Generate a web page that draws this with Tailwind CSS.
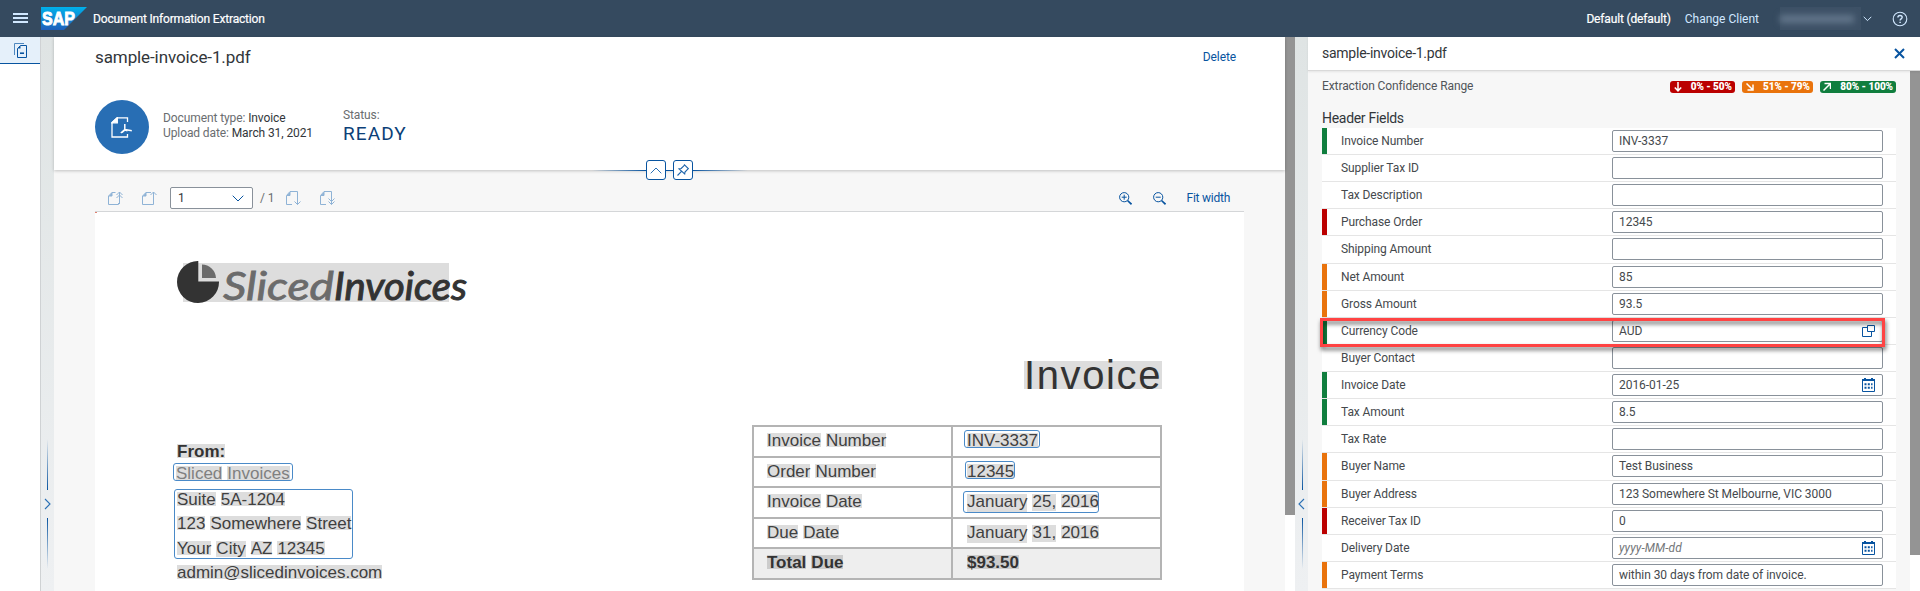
<!DOCTYPE html>
<html lang="en">
<head>
<meta charset="utf-8">
<title>Document Information Extraction</title>
<script src="https://cdn.jsdelivr.net/npm/@tailwindcss/browser@4"></script>
</head>
<body class="w-[1920px] h-[591px] overflow-hidden flex flex-col bg-[#f7f7f7] font-[Roboto,sans-serif] text-xs text-[#32363a] tracking-[-0.1px]">
<header class="h-[37px] shrink-0 bg-[#354a5f] flex items-center text-white">
  <svg class="ml-[13px]" width="15" height="11" fill="#d1e8ff"><path d="M0 0h15v2H0zM0 4h15v2H0zM0 8h15v2H0z"/></svg>
  <svg class="ml-[13px]" width="46" height="23" viewBox="0 0 46 23">
    <defs><linearGradient id="sap" x1="0" y1="0" x2="0" y2="1"><stop offset="0" stop-color="#00b1eb"/><stop offset="1" stop-color="#1e5fbb"/></linearGradient></defs>
    <path d="M0 0H46L23 23H0z" fill="url(#sap)"/>
    <text x="1" y="18" font-family="Liberation Sans" font-weight="700" font-size="19" letter-spacing="0" textLength="33" lengthAdjust="spacingAndGlyphs" fill="#fff" stroke="#fff" stroke-width=".9">SAP</text>
  </svg>
  <h1 class="ml-[6px] tracking-[-0.17px] pt-px [-webkit-text-stroke:0.2px_white]">Document Information Extraction</h1>
  <span class="ml-auto tracking-[-0.15px] pt-px [-webkit-text-stroke:0.2px_white]">Default (default)</span>
  <span class="ml-[14px] pt-px tracking-[0px] text-[#d1e8ff]">Change Client</span>
  <span class="ml-[21px] w-[81px] h-[23px] bg-[#3d5166] flex items-center"><span class="w-[74px] h-2 bg-[#62758a] blur-[3px]"></span></span>
  <svg class="ml-[2px]" width="9" height="6" fill="none" stroke="#d1e8ff"><path d="M.7.8 4.5 4.6 8.3.8"/></svg>
  <svg class="ml-[20px] mr-[12px]" width="16" height="16" fill="none" stroke="#d1e8ff"><circle cx="8" cy="8" r="6.8" stroke-width="1.1"/><path d="M5.9 6.5c0-2.8 4.3-2.6 4.3-.2 0 1.6-2.1 1.6-2.1 3.2" stroke-width="1.4"/><path d="M8.1 10.7v1.4" stroke-width="1.5"/></svg>
</header>

<div class="flex flex-1 min-h-0">
  <nav class="w-10 bg-white">
    <div class="h-[27px] bg-[#e5f0fa] border-b border-[#0854a0] flex items-center pl-[14px]">
      <svg width="13" height="15" fill="none" stroke="#0854a0"><path d="M.5 12V.5H10" stroke="#4f88bf"/><path d="M6.500 2.500h6v12h-9v-9z"/><path d="M3.500 5.500h3v-3z" fill="#0854a0" stroke="none"/><path d="M6 10.200h4" stroke-width="1.600"/></svg>
    </div>
  </nav>

  <div class="w-[14px] border-l border-[#cfd2d4] bg-linear-to-b from-[#dfe4e4] to-[#eef0f2] flex flex-col items-center pt-[402px]">
    <div class="w-px h-[51px] bg-linear-to-b from-transparent to-[#0854a0]"></div>
    <svg class="my-[8px]" width="7" height="12" fill="none" stroke="#2a70b5" stroke-width="1.1"><path d="M1 1l5 5-5 5"/></svg>
    <div class="w-px h-[51px] bg-linear-to-b from-[#0854a0] to-transparent"></div>
  </div>

  <main class="w-[1231px] flex flex-col">
    <section class="relative z-10 h-[133px] shrink-0 bg-white shadow-[0_1px_3px_rgba(0,0,0,0.22)] pl-[41px] pr-[48px]">
      <div class="flex justify-between h-[40px] items-center">
        <h2 class="text-[17px] tracking-[-0.1px]">sample-invoice-1.pdf</h2>
        <a class="text-[#0854a0] mr-px">Delete</a>
      </div>
      <div class="flex mt-[23px]">
        <div class="size-[54px] rounded-full bg-[#286eb4] flex items-center justify-center">
          <svg width="22" height="21" fill="none" stroke="#fff" stroke-width="1.3"><path d="M16.5 5V.8H6L1 5.500V20h15.500v-3"/><path d="M1 5.800H6.300V.8z" fill="#fff"/><path d="M13.800 7v5.500l-4 3.500M13.800 12.500c2.500.3 5 1 7 1.300M11 15.500l3-2.500 2.500.7" stroke-width="1.500"/></svg>
        </div>
        <div class="ml-[14px] w-[152px] whitespace-nowrap pt-[11px] leading-[15px] text-[#6a6d70]">
          <p>Document type: <span class="text-[#32363a]">Invoice</span></p>
          <p>Upload date: <span class="text-[#32363a]">March 31, 2021</span></p>
        </div>
        <div class="ml-[28px] pt-[8px] leading-[15px] text-[#6a6d70]">
          <p>Status:</p>
          <p class="text-[19px] leading-[22px] tracking-[1.1px] text-[#0c3f78]">READY</p>
        </div>
      </div>
      <div class="absolute left-[538px] bottom-[-10px] flex items-center">
        <div class="w-[54px] h-px bg-linear-to-r from-transparent to-[#0854a0]"></div>
        <button class="size-5 rounded-[3px] border border-[#0854a0] bg-white flex items-center justify-center"><svg width="12" height="7" fill="none" stroke="#2a70b5"><path d="M.7 6.300 6 1l5.300 5.300"/></svg></button>
        <div class="w-[7px] h-px bg-[#0854a0]"></div>
        <button class="size-5 rounded-[3px] border border-[#0854a0] bg-white flex items-center justify-center"><svg width="12" height="12" fill="none" stroke="#1c63aa" stroke-width="1.1"><path d="M.5 11.500 4.500 7.300M7.500.8l3.800 3.800-1 1L8 8l-.3 2L2 4.800l2.200-.3L6.800 1.800z"/></svg></button>
        <div class="w-[55px] h-px bg-linear-to-r from-[#0854a0] to-transparent"></div>
      </div>
    </section>

    <section class="flex flex-col flex-1 w-[1149px] ml-[41px]">
      <div class="h-[42px] shrink-0 border-b border-[#d4d6d8] flex items-center pt-[17px] pb-[2px] text-[#0854a0]">
        <svg class="ml-[13px]" width="16" height="15" fill="none" stroke="#8fb3d6"><path d="M7.500 1.500H4L.5 5v8.500h10V12"/><path d="M1 5h3V1.500" fill="#8fb3d6"/><path d="M11.500 13V1M8.500 4l3-3 3 3M8.500 7l3-3 3 3"/></svg>
        <svg class="ml-[18px]" width="16" height="15" fill="none" stroke="#8fb3d6"><path d="M9 1.500H4L.5 5v8.500h11V12"/><path d="M1 5h3V1.500" fill="#8fb3d6"/><path d="M11.500 13V1M8.500 4l3-3 3 3"/></svg>
        <div class="ml-[12px] w-[83px] h-[22px] shrink-0 border border-[#89919a] rounded-[2px] bg-white flex items-center justify-between pl-[7px] pr-[8px] text-[#32363a]">1<svg width="12" height="7" fill="none" stroke="#0854a0"><path d="M.7.7 6 6 11.300.7"/></svg></div>
        <span class="ml-[7px] text-[#6a6d70]">/ 1</span>
        <svg class="ml-[12px]" width="16" height="15" fill="none" stroke="#8fb3d6"><path d="M6 13.500H.5V4.500l3.500-4h7.500V4"/><path d="M1 4.500h3V1" fill="#8fb3d6"/><path d="M11.500 4v9.500M8.500 10.500l3 3 3-3"/></svg>
        <svg class="ml-[18px]" width="16" height="15" fill="none" stroke="#8fb3d6"><path d="M6 13.500H.5V4.500l3.500-4h7.500V4"/><path d="M1 4.500h3V1" fill="#8fb3d6"/><path d="M11.500 4v9.500M8.500 7.500l3 3 3-3M8.500 10.500l3 3 3-3"/></svg>
        <svg class="ml-auto" width="13" height="13" fill="none" stroke="#0854a0"><circle cx="5.200" cy="5.200" r="4.600"/><path d="M5.200 2.700v5M2.700 5.200h5"/><path d="M8.500 8.500l4 3.800" stroke-width="1.700"/></svg>
        <svg class="ml-[21px]" width="13" height="13" fill="none" stroke="#0854a0"><circle cx="5.200" cy="5.200" r="4.600"/><path d="M2.700 5.200h5"/><path d="M8.500 8.500l4 3.800" stroke-width="1.700"/></svg>
        <span class="ml-[21px] mr-[14px] tracking-[-0.25px]">Fit width</span>
      </div>

      <article class="relative flex-1 bg-white overflow-hidden flex justify-between pl-[82px] pr-[82px] font-['Liberation_Sans',Arial,sans-serif] text-[17px] leading-[16px] tracking-[0px] text-[#404040]">
        <div class="absolute left-0 top-0 w-[2px] h-px bg-[#e08070]"></div>
        <div class="w-[300px] pt-[49px]">
          <svg width="292" height="46" viewBox="0 0 292 46">
            <path d="M6 2h266v39H6z" fill="#ddd"/>
            <path d="M21.300 0V20.500H42A21 21 0 1 1 21.300 0z" fill="#333"/>
            <path d="M25 3.500A14.500 14.500 0 0 1 39 17H25z" fill="#6b6b6b"/>
            <g font-family="Lato" font-style="italic" font-size="38"><text x="46" y="39" textLength="111" lengthAdjust="spacingAndGlyphs" fill="#6b6b6b" stroke="#6b6b6b" stroke-width=".8">Sliced</text><text x="157" y="39" textLength="133" lengthAdjust="spacingAndGlyphs" fill="#333" stroke="#333" stroke-width="1">Invoices</text></g>
          </svg>
          <div class="mt-[137px] flex font-bold text-[#333]"><span class="h-[14px] bg-[#ddd]">From:</span></div>
          <div class="relative mt-[8px] flex gap-[5px] text-[#808080] ml-[-1px]"><span class="h-[15px] bg-[#ddd]">Sliced</span><span class="h-[15px] bg-[#ddd]">Invoices</span>
            <div class="absolute left-[-3px] top-[-3px] w-[120px] h-[18px] border border-[#4a8ac8] rounded-[3px]"></div></div>
          <div class="relative mt-[11px] flex gap-[5px]"><span class="h-[14px] bg-[#ddd]">Suite</span><span class="h-[14px] bg-[#ddd]">5A-1204</span>
            <div class="absolute left-[-3px] top-[-3px] w-[179px] h-[70px] border border-[#4a8ac8] rounded-[3px]"></div></div>
          <div class="mt-[10px] flex gap-[5px]"><span class="h-[14px] bg-[#ddd]">123</span><span class="h-[14px] bg-[#ddd]">Somewhere</span><span class="h-[14px] bg-[#ddd]">Street</span></div>
          <div class="mt-[11px] h-[14px] flex gap-[5px] items-start"><span class="h-[14px] bg-[#ddd]">Your</span><span class="h-[16px] bg-[#ddd]">City</span><span class="h-[14px] bg-[#ddd]">AZ</span><span class="h-[14px] bg-[#ddd]">12345</span></div>
          <div class="mt-[10px] flex"><span class="h-[14px] bg-[#ddd]">admin@slicedinvoices.com</span></div>
        </div>

        <div class="w-[410px] pt-[149px]">
          <div class="flex justify-end"><h3 class="h-[28px] leading-[28px] bg-[#ddd] text-[40px] tracking-[1.6px] text-[#333]">Invoice</h3></div>
          <div class="mt-[36px] border-2 border-b-0 border-[#b4b4b4]">
            <div class="h-[30.6px] flex border-b-2 border-[#b4b4b4]"><div class="w-[199px] border-r-2 border-[#b4b4b4] pl-[13px] pt-[6px] flex gap-[5px]"><span class="h-[14px] bg-[#ddd]">Invoice</span><span class="h-[14px] bg-[#ddd]">Number</span></div><div class="relative pl-[14px] pt-[6px] flex"><span class="h-[14px] bg-[#ddd]">INV-3337</span><div class="absolute left-[11px] top-[3px] w-[76px] h-[18px] border border-[#4a8ac8] rounded-[3px]"></div></div></div>
            <div class="h-[30.6px] flex border-b-2 border-[#b4b4b4]"><div class="w-[199px] border-r-2 border-[#b4b4b4] pl-[13px] pt-[6px] flex gap-[5px]"><span class="h-[14px] bg-[#ddd]">Order</span><span class="h-[14px] bg-[#ddd]">Number</span></div><div class="relative pl-[14px] pt-[6px] flex"><span class="h-[14px] bg-[#ddd]">12345</span><div class="absolute left-[12px] top-[3px] w-[50px] h-[18px] border border-[#4a8ac8] rounded-[3px]"></div></div></div>
            <div class="h-[30.6px] flex border-b-2 border-[#b4b4b4]"><div class="w-[199px] border-r-2 border-[#b4b4b4] pl-[13px] pt-[6px] flex gap-[5px]"><span class="h-[14px] bg-[#ddd]">Invoice</span><span class="h-[14px] bg-[#ddd]">Date</span></div><div class="relative pl-[14px] pt-[6px] flex gap-[5px]"><span class="h-[18px] bg-[#ddd]">January</span><span class="h-[17px] bg-[#ddd]">25,</span><span class="h-[14px] bg-[#ddd]">2016</span><div class="absolute left-[10px] top-[3px] w-[136px] h-[22px] border border-[#4a8ac8] rounded-[3px]"></div></div></div>
            <div class="h-[30.6px] flex border-b-2 border-[#b4b4b4]"><div class="w-[199px] border-r-2 border-[#b4b4b4] pl-[13px] pt-[6px] flex gap-[5px]"><span class="h-[14px] bg-[#ddd]">Due</span><span class="h-[14px] bg-[#ddd]">Date</span></div><div class="pl-[14px] pt-[6px] flex gap-[5px]"><span class="h-[18px] bg-[#ddd]">January</span><span class="h-[17px] bg-[#ddd]">31,</span><span class="h-[14px] bg-[#ddd]">2016</span></div></div>
            <div class="h-[30.6px] flex border-b-2 border-[#b4b4b4] bg-[#eee] font-bold text-[#333]"><div class="w-[199px] border-r-2 border-[#b4b4b4] pl-[13px] pt-[6px] flex gap-[5px]"><span class="h-[14px] bg-[#ccc]">Total</span><span class="h-[14px] bg-[#ccc]">Due</span></div><div class="pl-[14px] pt-[6px] flex"><span class="h-[14px] bg-[#ccc]">$93.50</span></div></div>
          </div>
        </div>
      </article>
    </section>
  </main>

  <div class="w-[10px] bg-white"><div class="h-[478px] bg-[#949494]"></div></div>

  <div class="w-[13px] bg-linear-to-b from-[#dfe4e4] to-[#eef0f2] flex flex-col items-center pl-[2px] pt-[402px]">
    <div class="w-px h-[51px] bg-linear-to-b from-transparent to-[#0854a0]"></div>
    <svg class="my-[8px] mr-[2px]" width="7" height="12" fill="none" stroke="#2a70b5" stroke-width="1.1"><path d="M6 1 1 6l5 5"/></svg>
    <div class="w-px h-[51px] bg-linear-to-b from-[#0854a0] to-transparent"></div>
  </div>

  <aside class="w-[612px] flex flex-col">
    <div class="relative z-10 h-[34px] shrink-0 bg-white border-b border-[#d9d9d9] shadow-[0_1px_2px_rgba(0,0,0,0.08)] flex items-center justify-between pl-[14px] pr-[15px]">
      <h2 class="text-[14px] tracking-[-0.25px]">sample-invoice-1.pdf</h2>
      <svg width="11" height="11" stroke="#0854a0" stroke-width="2"><path d="M1 1l9 9M10 1l-9 9"/></svg>
    </div>
    <div class="flex flex-1 min-h-0">
      <div class="w-[602px] pl-[14px] pr-[14px]">
        <div class="h-[30px] flex items-center text-[#6a6d70]">
          <span class="mr-auto text-[#51555a]">Extraction Confidence Range</span>
          <div class="flex gap-[7px] text-[10px] leading-[12px] font-black text-white tracking-[-0.05px] mt-[2px]">
            <span class="w-[65px] h-[12px] rounded-[3px] bg-[#b00] flex items-center justify-between pl-[4px] pr-[3px]"><svg width="8" height="10" fill="none" stroke="#fff" stroke-width="1.500"><path d="M4 0v9M.8 5.500 4 8.800l3.200-3.300"/></svg>0% - 50%</span>
            <span class="w-[71px] h-[12px] rounded-[3px] bg-[#e9730c] flex items-center justify-between pl-[4px] pr-[3px]"><svg width="8" height="8" fill="none" stroke="#fff" stroke-width="1.500"><path d="M.5.5l6 6M7 1.500V7H1.500"/></svg>51% - 79%</span>
            <span class="w-[76px] h-[12px] rounded-[3px] bg-[#107e3e] flex items-center justify-between pl-[3px] pr-[3px]"><svg width="8" height="10" fill="none" stroke="#fff" stroke-width="1.500"><path d="M.5 8.500 7 2M1.500 1.500h6V7"/></svg>80% - 100%</span>
          </div>
        </div>
        <h3 class="h-[27px] pt-[9px] text-[14px] leading-[16px] tracking-[-0.3px]">Header Fields</h3>
        <div class="relative">
          <div id="fields"></div>
          <div class="absolute left-[-2px] top-[190px] w-[565px] h-[29px] border-3 border-[#ff4343] [filter:drop-shadow(1px_3px_2px_rgba(0,0,0,0.6))]"></div>
        </div>
      </div>
      <div class="w-[10px] bg-white"><div class="h-[484px] bg-[#949494]"></div></div>
    </div>
  </aside>
</div>
<script>
const bars = { g: 'w-[5px] bg-[#107e3e]', r: 'w-[5px] bg-[#b00]', o: 'w-[5px] bg-[#e9730c]', n: 'w-[5px]' };
const icons = {
  cal: '<svg width="13" height="14" fill="none" stroke="#0854a0"><path d="M.5 2v11.500h12V2"/><path d="M0 1h13v2H0zM2 0h2v2H2zM9 0h2v2H9z" fill="#0854a0" stroke="none"/><path d="M2.500 6.200h8M2.500 9.700h8" stroke-width="2" stroke-dasharray="2 1.300"/></svg>',
  help: '<svg width="13" height="12" fill="none" stroke="#0854a0"><path d="M5.500.5h7v6h-7z"/><path d="M5 2.500H.5v9h9V7"/></svg>'
};
const rows = [
  ['g', 'Invoice Number', 'INV-3337'], ['n', 'Supplier Tax ID', ''], ['n', 'Tax Description', ''], ['r', 'Purchase Order', '12345'],
  ['n', 'Shipping Amount', ''], ['o', 'Net Amount', '85'], ['o', 'Gross Amount', '93.5'], ['g', 'Currency Code', 'AUD', 'help'],
  ['n', 'Buyer Contact', ''], ['g', 'Invoice Date', '2016-01-25', 'cal'], ['g', 'Tax Amount', '8.5'], ['n', 'Tax Rate', ''],
  ['o', 'Buyer Name', 'Test Business'], ['o', 'Buyer Address', '123 Somewhere St Melbourne, VIC 3000'], ['r', 'Receiver Tax ID', '0'],
  ['n', 'Delivery Date', '<i class="text-[#74777a] tracking-[0.1px]">yyyy-MM-dd</i>', 'cal'], ['o', 'Payment Terms', 'within 30 days from date of invoice.']
];
document.getElementById('fields').innerHTML = rows.map(([c, label, value, icon], i) => `
  <div class="${i === 4 || i === 12 ? 'h-[28px]' : 'h-[27px]'} flex bg-white border-b border-[#e5e5e5]">
    <div class="${bars[c]}"></div>
    <label class="w-[285px] pl-[14px] pt-[6px] leading-[15px] tracking-[-0.1px] text-[#45494d]">${label}</label>
    <div class="mt-[2px] w-[271px] h-[22px] border border-[#89919a] rounded-[2px] bg-white flex items-center justify-between pl-[6px] pr-[7px] tracking-[-0.05px] text-[#45494d]"><span>${value}</span>${icon ? icons[icon] : ''}</div>
  </div>`).join('');
</script>
</body>
</html>
